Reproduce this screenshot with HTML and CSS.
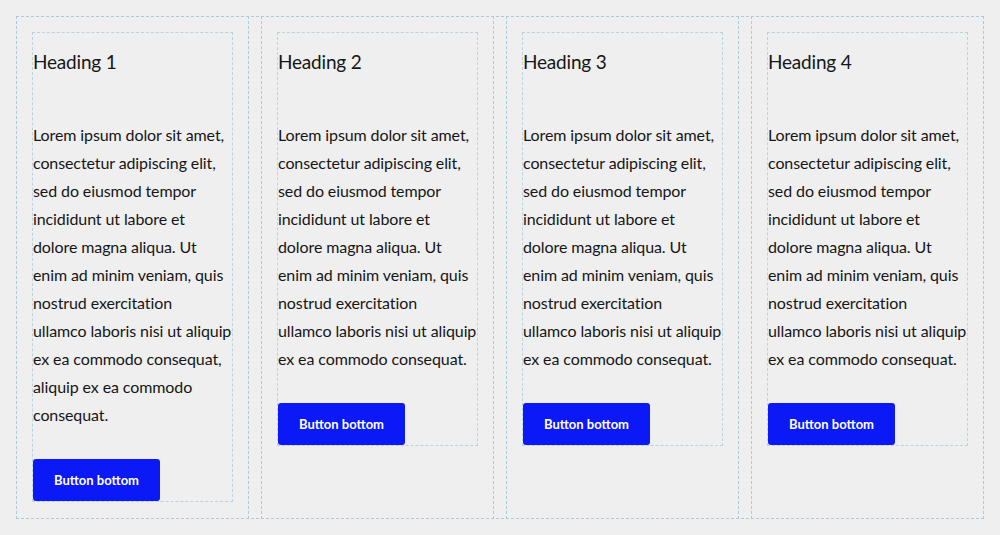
FILE: index.html
```html
<!DOCTYPE html>
<html lang="en">
<head>
<meta charset="utf-8">
<title>Columns</title>
<link rel="stylesheet" href="styles.css">
</head>
<body>
<div class="columns">
  <section class="column">
    <div class="card">
      <h3 class="card-title">Heading 1</h3>
      <p class="card-text">Lorem ipsum dolor sit amet,<br>consectetur adipiscing elit,<br>sed do eiusmod tempor<br>incididunt ut labore et<br>dolore magna aliqua. Ut<br>enim ad minim veniam, quis<br>nostrud exercitation<br>ullamco laboris nisi ut aliquip<br>ex ea commodo consequat,<br>aliquip ex ea commodo<br>consequat.</p>
      <a class="card-button" href="#">Button bottom</a>
    </div>
  </section>
  <section class="column">
    <div class="card">
      <h3 class="card-title">Heading 2</h3>
      <p class="card-text">Lorem ipsum dolor sit amet,<br>consectetur adipiscing elit,<br>sed do eiusmod tempor<br>incididunt ut labore et<br>dolore magna aliqua. Ut<br>enim ad minim veniam, quis<br>nostrud exercitation<br>ullamco laboris nisi ut aliquip<br>ex ea commodo consequat.</p>
      <a class="card-button" href="#">Button bottom</a>
    </div>
  </section>
  <section class="column">
    <div class="card">
      <h3 class="card-title">Heading 3</h3>
      <p class="card-text">Lorem ipsum dolor sit amet,<br>consectetur adipiscing elit,<br>sed do eiusmod tempor<br>incididunt ut labore et<br>dolore magna aliqua. Ut<br>enim ad minim veniam, quis<br>nostrud exercitation<br>ullamco laboris nisi ut aliquip<br>ex ea commodo consequat.</p>
      <a class="card-button" href="#">Button bottom</a>
    </div>
  </section>
  <section class="column">
    <div class="card">
      <h3 class="card-title">Heading 4</h3>
      <p class="card-text">Lorem ipsum dolor sit amet,<br>consectetur adipiscing elit,<br>sed do eiusmod tempor<br>incididunt ut labore et<br>dolore magna aliqua. Ut<br>enim ad minim veniam, quis<br>nostrud exercitation<br>ullamco laboris nisi ut aliquip<br>ex ea commodo consequat.</p>
      <a class="card-button" href="#">Button bottom</a>
    </div>
  </section>
</div>
</body>
</html>
```

FILE: styles.css
```css
html, body {
  margin: 0;
  background: #efefef;
}

body {
  padding: 16px;
  font-family: "Lato", "Noto Sans", sans-serif;
  color: #161616;
}

/* four equal columns inside a dashed outline */
.columns {
  display: grid;
  grid-template-columns: repeat(4, 1fr);
  gap: 12px;
  height: 503px;
  box-sizing: border-box;
  outline: 1px dashed #a9cbdc;
  outline-offset: -1px;
}

.column {
  border: 1px dashed #a9cbdc;
  padding: 15px;
  box-sizing: border-box;
}

.card {
  border: 1px dashed #b9d3df;
  display: flex;
  flex-direction: column;
  align-items: flex-start;
}

.card-title {
  margin: 17px 0 47px;
  font-size: 19px;
  line-height: 24px;
  font-weight: 400;
  letter-spacing: -0.2px;
}

.card-text {
  margin: 0;
  font-size: 16px;
  line-height: 28px;
  letter-spacing: -0.1px;
  white-space: nowrap;
}

.card-button {
  margin-top: 30px;
  padding: 12px 21px;
  background: #0a19f6;
  color: #fff;
  font-size: 13px;
  line-height: 18px;
  font-weight: 700;
  text-decoration: none;
  border-radius: 3px;
}
```
